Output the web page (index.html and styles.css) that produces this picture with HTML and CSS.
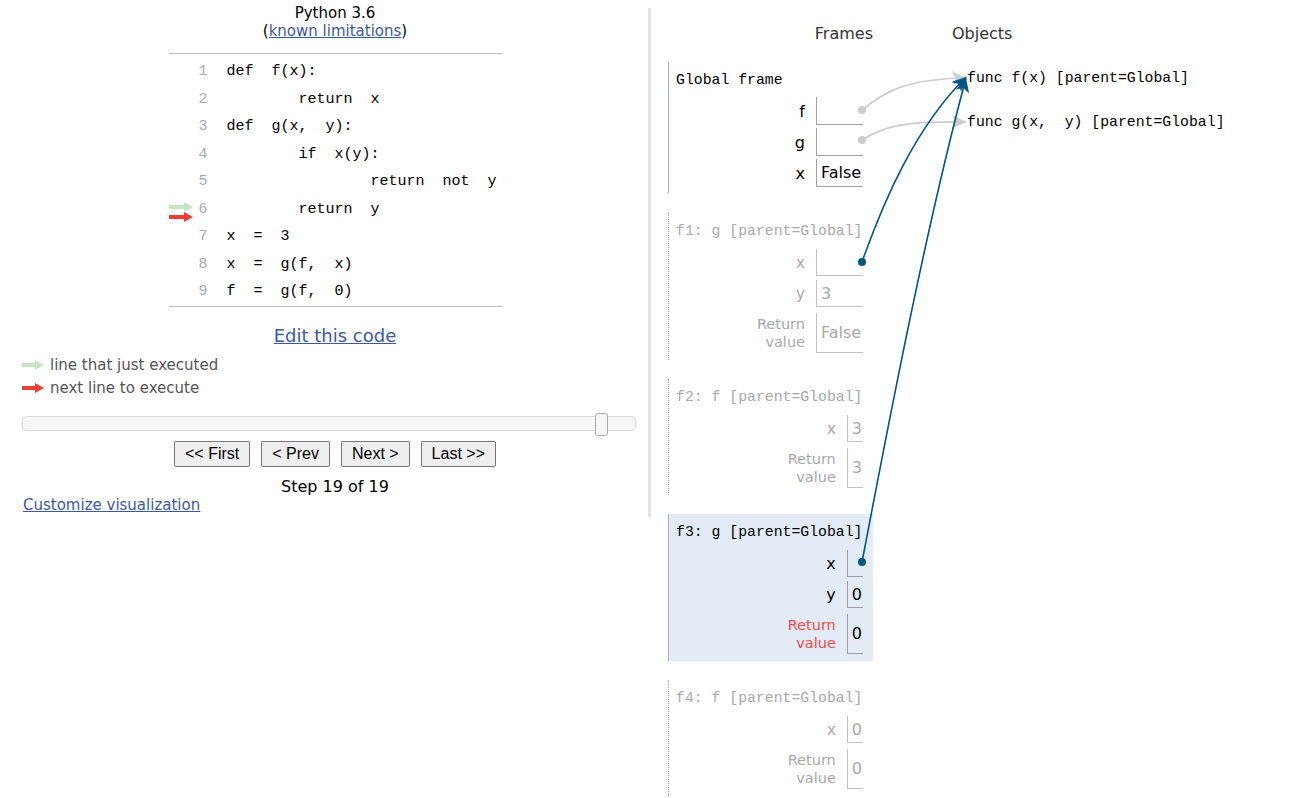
FILE: index.html
```html
<!DOCTYPE html>
<html>
<head>
<meta charset="utf-8">
<link rel="stylesheet" href="styles.css">
</head>
<body>
<div class="page">
  <div class="left">
    <div class="lang">Python 3.6<br>(<a href="#" class="link">known limitations</a>)</div>
    <div class="code">
      <div class="row"><div class="gutter"></div><div class="ln">1</div><div class="src">def  f(x):</div></div>
      <div class="row"><div class="gutter"></div><div class="ln">2</div><div class="src">        return  x</div></div>
      <div class="row"><div class="gutter"></div><div class="ln">3</div><div class="src">def  g(x,  y):</div></div>
      <div class="row"><div class="gutter"></div><div class="ln">4</div><div class="src">        if  x(y):</div></div>
      <div class="row"><div class="gutter"></div><div class="ln">5</div><div class="src">                return  not  y</div></div>
      <div class="row"><div class="gutter">
        <svg class="arr" width="24" height="10" viewBox="0 0 24 10"><polygon points="0,3 15,3 15,0 24,5 15,10 15,7 0,7" fill="#c6e4c6"/></svg>
        <svg class="arr" width="24" height="10" viewBox="0 0 24 10"><polygon points="0,3 15,3 15,0 24,5 15,10 15,7 0,7" fill="#e93f34"/></svg>
      </div><div class="ln">6</div><div class="src">        return  y</div></div>
      <div class="row"><div class="gutter"></div><div class="ln">7</div><div class="src">x  =  3</div></div>
      <div class="row"><div class="gutter"></div><div class="ln">8</div><div class="src">x  =  g(f,  x)</div></div>
      <div class="row"><div class="gutter"></div><div class="ln">9</div><div class="src">f  =  g(f,  0)</div></div>
    </div>
    <div class="edit"><a href="#" class="link">Edit this code</a></div>
    <div class="legend">
      <div class="legend-row"><svg width="22" height="10" viewBox="0 0 22 10"><polygon points="0,3 13,3 13,0 22,5 13,10 13,7 0,7" fill="#c6e4c6"/></svg><span>line that just executed</span></div>
      <div class="legend-row"><svg width="22" height="10" viewBox="0 0 22 10"><polygon points="0,3 13,3 13,0 22,5 13,10 13,7 0,7" fill="#e93f34"/></svg><span>next line to execute</span></div>
    </div>
    <div class="slider"><div class="handle"></div></div>
    <div class="buttons">
      <button class="btn">&lt;&lt; First</button>
      <button class="btn">&lt; Prev</button>
      <button class="btn">Next &gt;</button>
      <button class="btn">Last &gt;&gt;</button>
    </div>
    <div class="step">Step 19 of 19</div>
    <div class="customize"><a href="#" class="link">Customize visualization</a></div>
  </div>
  <div class="divider"></div>
  <div class="right">
    <div class="frames-col">
      <div class="col-head frames-head">Frames</div>
      <div class="frame global">
        <div class="fhead">Global frame</div>
        <div class="vars">
          <div class="vname">f</div><div class="vval wide"></div>
          <div class="vname">g</div><div class="vval wide"></div>
          <div class="vname">x</div><div class="vval wide">False</div>
        </div>
      </div>
      <div class="frame zombie">
        <div class="fhead">f1: g [parent=Global]</div>
        <div class="vars">
          <div class="vname">x</div><div class="vval wide"></div>
          <div class="vname">y</div><div class="vval wide">3</div>
          <div class="vname ret">Return<br>value</div><div class="vval wide retv">False</div>
        </div>
      </div>
      <div class="frame zombie">
        <div class="fhead">f2: f [parent=Global]</div>
        <div class="vars">
          <div class="vname">x</div><div class="vval">3</div>
          <div class="vname ret">Return<br>value</div><div class="vval retv">3</div>
        </div>
      </div>
      <div class="frame current">
        <div class="fhead">f3: g [parent=Global]</div>
        <div class="vars">
          <div class="vname">x</div><div class="vval"></div>
          <div class="vname">y</div><div class="vval">0</div>
          <div class="vname ret red">Return<br>value</div><div class="vval retv">0</div>
        </div>
      </div>
      <div class="frame zombie">
        <div class="fhead">f4: f [parent=Global]</div>
        <div class="vars">
          <div class="vname">x</div><div class="vval">0</div>
          <div class="vname ret">Return<br>value</div><div class="vval retv">0</div>
        </div>
      </div>
    </div>
    <div class="objects-col">
      <div class="col-head">Objects</div>
      <div class="objects">
        <div class="obj">func f(x) [parent=Global]</div>
        <div class="obj">func g(x,  y) [parent=Global]</div>
      </div>
    </div>
  </div>
  <svg class="pointers" width="1315" height="798" viewBox="0 0 1315 798">
    <defs>
      <marker id="headGray" markerUnits="userSpaceOnUse" markerWidth="16" markerHeight="14" refX="14" refY="7" orient="auto">
        <path d="M0,0 L14,7 L0,14 L4,7 Z" fill="#cccccc"/>
      </marker>
      <marker id="headBlue" markerUnits="userSpaceOnUse" markerWidth="16" markerHeight="14" refX="14" refY="7" orient="auto">
        <path d="M0,0 L14,7 L0,14 L4,7 Z" fill="#005583"/>
      </marker>
    </defs>
    <path d="M862,110 C884,92 905,79 966,78" fill="none" stroke="#cccccc" stroke-width="1.6" marker-end="url(#headGray)"/>
    <path d="M862,140 C884,126 905,121 966,122" fill="none" stroke="#cccccc" stroke-width="1.6" marker-end="url(#headGray)"/>
    <circle cx="862" cy="110" r="4" fill="#cccccc"/>
    <circle cx="862" cy="140" r="4" fill="#cccccc"/>
    <path d="M862,262 C884,200 915,128 966,77" fill="none" stroke="#005583" stroke-width="1.6" marker-end="url(#headBlue)"/>
    <path d="M862,562 C878,480 920,250 966,78" fill="none" stroke="#005583" stroke-width="1.6" marker-end="url(#headBlue)"/>
    <circle cx="862" cy="262" r="4" fill="#005583"/>
    <circle cx="862" cy="562" r="4" fill="#005583"/>
  </svg>
</div>
</body>
</html>
```

FILE: styles.css
```css
html, body {
  margin: 0;
  padding: 0;
  background: #ffffff;
}
body {
  font-family: "DejaVu Sans", Verdana, sans-serif;
  color: #000;
}
.page {
  position: relative;
  width: 1315px;
  height: 798px;
  display: flex;
  align-items: flex-start;
  overflow: hidden;
}
.link {
  color: #3d58a2;
  text-decoration: underline;
}
.left {
  width: 626px;
  padding-left: 22px;
  display: flex;
  flex-direction: column;
  align-items: center;
}
.lang {
  font-size: 15px;
  line-height: 18px;
  padding-top: 4px;
  text-align: center;
}
.code {
  margin-top: 13px;
  width: 333px;
  border-top: 1px solid #bbbbbb;
  border-bottom: 1px solid #bbbbbb;
  padding: 4px 0 0;
  font-family: "Liberation Mono", "DejaVu Sans Mono", monospace;
  font-size: 15px;
}
.row {
  display: flex;
  align-items: center;
  height: 27.5px;
}
.gutter {
  width: 24px;
  height: 27.5px;
  display: flex;
  flex-direction: column;
  justify-content: center;
  margin-top: 5px;
}
.arr {
  display: block;
}
.ln {
  width: 15px;
  text-align: right;
  color: #aaaaaa;
  margin-right: 19px;
}
.src {
  white-space: pre;
  color: #000;
}
.edit {
  margin-top: 18px;
  font-size: 18px;
  line-height: 22px;
}
.legend {
  align-self: stretch;
  margin-top: 7px;
  font-size: 15px;
  color: #555555;
}
.legend-row {
  display: flex;
  align-items: center;
  height: 23px;
  gap: 6px;
}
.legend-row svg {
  display: block;
}
.slider {
  position: relative;
  align-self: stretch;
  width: 612px;
  margin-top: 16px;
  height: 13px;
  border: 1px solid #dddddd;
  border-radius: 4px;
  background: #f6f6f6;
}
.handle {
  position: absolute;
  left: 572px;
  top: -4px;
  width: 11px;
  height: 21px;
  border: 1px solid #aaaaaa;
  border-radius: 3px;
  background: #f6f6f6;
}
.buttons {
  margin-top: 10px;
  display: flex;
  gap: 11px;
}
.btn {
  font-family: "Liberation Sans", Arial, sans-serif;
  font-size: 16px;
  line-height: 18px;
  height: 26px;
  padding: 3px 10px;
  background: #efefef;
  border: 1px solid #767676;
  border-radius: 2px;
  color: #000;
}
.step {
  margin-top: 11px;
  font-size: 16px;
  line-height: 18px;
}
.customize {
  align-self: flex-start;
  padding-left: 1px;
  font-size: 15px;
  line-height: 18px;
}
.divider {
  width: 3px;
  height: 509px;
  margin-top: 8px;
  background: #e3e3e3;
}
.right {
  display: flex;
  padding-left: 17px;
  padding-top: 24px;
}
.frames-col {
  width: 205px;
  display: flex;
  flex-direction: column;
}
.col-head {
  font-size: 16px;
  line-height: 20px;
  height: 20px;
  color: #333333;
}
.frames-head {
  text-align: right;
  margin-bottom: 18px;
}
.frame {
  box-sizing: border-box;
  width: 205px;
  padding: 8px 10px 7px 7px;
  border-left: 1px solid #a6b3b6;
  margin-bottom: 19px;
}
.frame.global {
  padding-bottom: 6px;
  margin-bottom: 20px;
}
.frame.zombie {
  border-left: 1px dotted #aaaaaa;
  color: #a8a8a8;
}
.frame.current {
  background: #e2ebf6;
}
.fhead {
  font-family: "Liberation Mono", "DejaVu Sans Mono", monospace;
  font-size: 14.8px;
  line-height: 20px;
  white-space: pre;
  margin-bottom: 8px;
}
.global .fhead {
  margin-bottom: 7px;
}
.vars {
  display: grid;
  grid-template-columns: auto auto;
  justify-content: end;
  column-gap: 11px;
  row-gap: 4px;
}
.global .vars {
  row-gap: 3px;
}
.vname {
  display: flex;
  align-items: center;
  justify-content: flex-end;
  text-align: right;
  font-size: 16px;
  height: 27px;
}
.global .vname {
  height: 28px;
}
.zombie .vname {
  font-size: 15px;
}
.vname.ret {
  font-size: 14.5px;
  line-height: 18px;
  height: 40px;
  margin-top: 2px;
}
.vname.red {
  color: #ee4b45;
}
.vval {
  box-sizing: border-box;
  display: flex;
  align-items: center;
  height: 27px;
  min-width: 16px;
  padding: 0 1px 0 4px;
  border-left: 1px solid #a0a0a0;
  border-bottom: 1px solid #a0a0a0;
  font-size: 16px;
}
.global .vval {
  height: 28px;
}
.zombie .vval {
  border-color: #c0c0c0;
}
.vval.wide {
  width: 47px;
}
.vval.retv {
  height: 40px;
  margin-top: 2px;
}
.objects-col {
  margin-left: 79px;
  display: flex;
  flex-direction: column;
}
.objects {
  margin-top: 24px;
  padding-left: 15px;
  display: flex;
  flex-direction: column;
  gap: 24px;
}
.obj {
  font-family: "Liberation Mono", "DejaVu Sans Mono", monospace;
  font-size: 14.8px;
  line-height: 20px;
  white-space: pre;
}
.pointers {
  position: absolute;
  left: 0;
  top: 0;
  pointer-events: none;
}
```
